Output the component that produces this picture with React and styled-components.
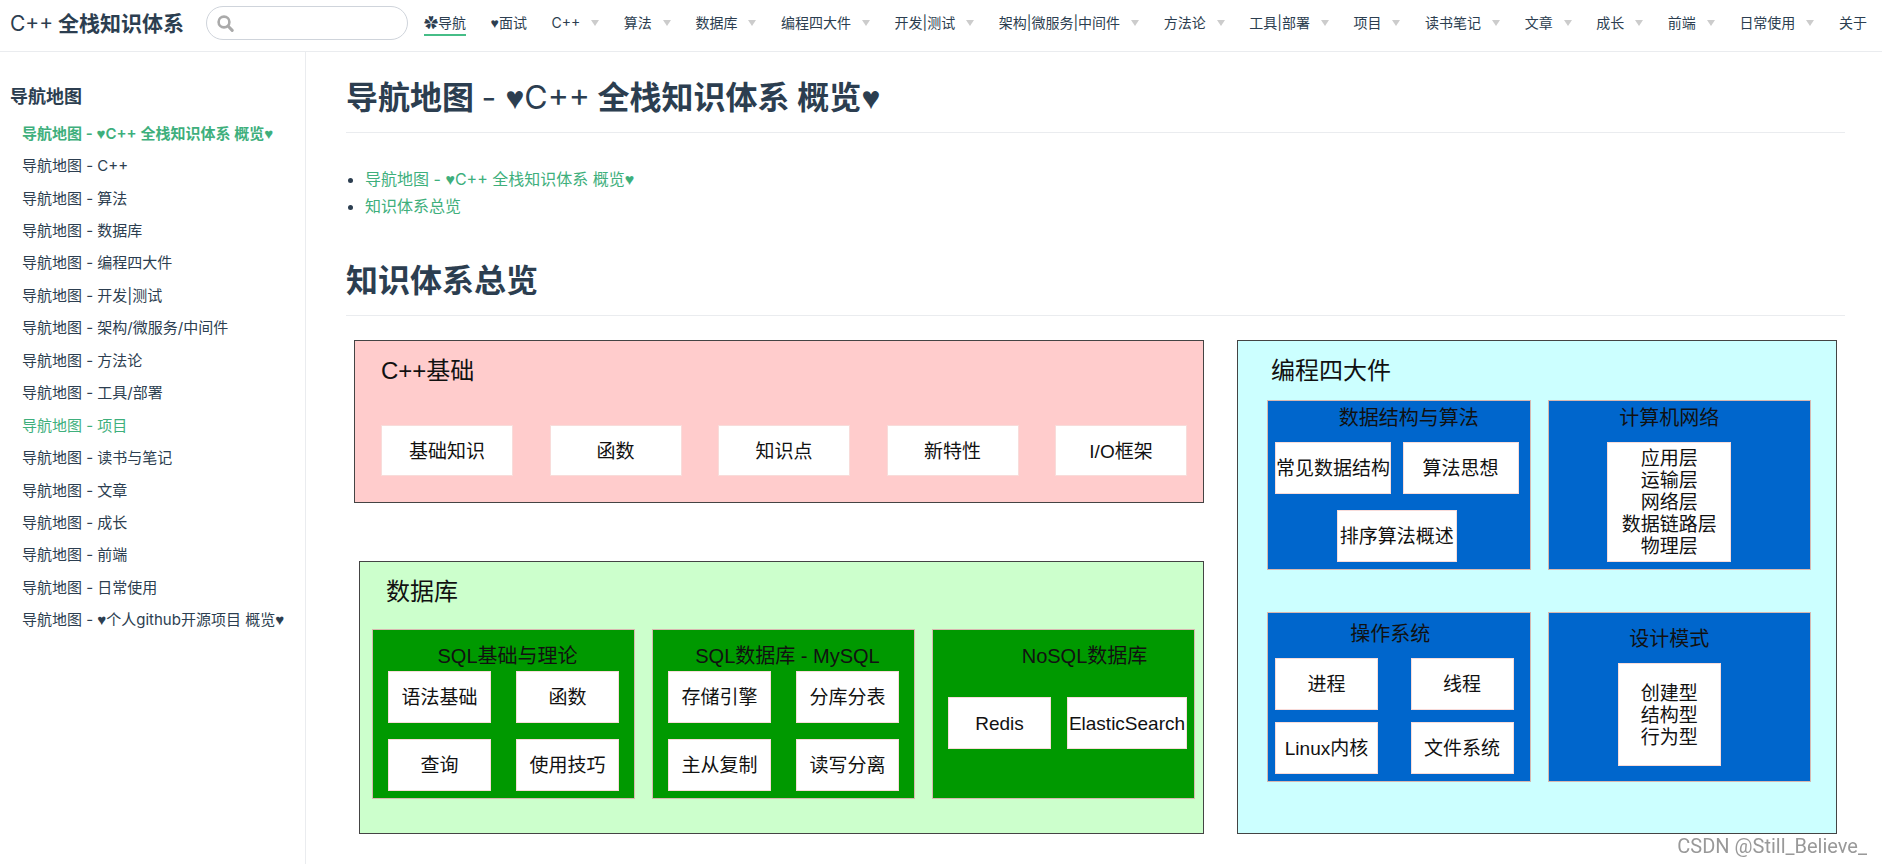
import React from "react";
import styled, { createGlobalStyle } from "styled-components";

const navItems = [
    { text: "✿导航", active: true },
    { text: "♥面试" },
    { text: "C++", menu: true },
    { text: "算法", menu: true },
    { text: "数据库", menu: true },
    { text: "编程四大件", menu: true },
    { text: "开发|测试", menu: true },
    { text: "架构|微服务|中间件", menu: true },
    { text: "方法论", menu: true },
    { text: "工具|部署", menu: true },
    { text: "项目", menu: true },
    { text: "读书笔记", menu: true },
    { text: "文章", menu: true },
    { text: "成长", menu: true },
    { text: "前端", menu: true },
    { text: "日常使用", menu: true },
    { text: "关于" },
];

const sideItems = [
    { text: "♥C++ 全栈知识体系 概览♥", bold: true, green: true },
    { text: "C++" },
    { text: "算法" },
    { text: "数据库" },
    { text: "编程四大件" },
    { text: "开发|测试" },
    { text: "架构/微服务/中间件" },
    { text: "方法论" },
    { text: "工具/部署" },
    { text: "项目", green: true },
    { text: "读书与笔记" },
    { text: "文章" },
    { text: "成长" },
    { text: "前端" },
    { text: "日常使用" },
    { text: "♥个人github开源项目 概览♥" },
];

// Inter's heart is too wide, so hearts get their own font
function Text({ children }) {
    return children.split(/(♥)/).map((part, i) => (
        part === "♥" ? <Heart key={i}>♥</Heart> : part
    ));
}

function SearchIcon() {
    return (
        <svg width="17" height="17" viewBox="0 0 17 17" fill="none" stroke="#aaa" aria-hidden="true">
            <circle cx="7" cy="7" r="5.4" strokeWidth="2.6" />
            <path d="M11 11 L15.2 15.4" strokeWidth="3" strokeLinecap="round" />
        </svg>
    );
}

function Header() {
    const [search, setSearch] = React.useState("");

    return (
        <Bar>
            <SiteName href="#home"><span>C++</span> 全栈知识体系</SiteName>
            <SearchBox>
                <SearchIcon />
                <input
                    type="text"
                    aria-label="搜索"
                    value={search}
                    onChange={(e) => setSearch(e.target.value)} />
            </SearchBox>
            <Nav>
                {navItems.map((item) => item.menu ? (
                    <NavButton key={item.text} type="button">
                        {item.text}
                        <Arrow />
                    </NavButton>
                ) : (
                    <NavLink key={item.text} href={"#" + item.text} $active={item.active}>
                        <Text>{item.text}</Text>
                    </NavLink>
                ))}
            </Nav>
        </Bar>
    );
}

function Sidebar() {
    return (
        <Side>
            <SideTitle>导航地图</SideTitle>
            <SideList>
                {sideItems.map((item) => (
                    <li key={item.text}>
                        <SideLink href={"#" + item.text} $bold={item.bold} $green={item.green}>
                            <Text>{"导航地图 - " + item.text}</Text>
                        </SideLink>
                    </li>
                ))}
            </SideList>
        </Side>
    );
}

function BasicsPanel() {
    return (
        <Panel $color="#ffcccc" $height={163}>
            <PanelTitle $left={26}>C++基础</PanelTitle>
            <BasicsRow>
                <Box $width={132} $height={51}>基础知识</Box>
                <Box $width={132} $height={51}>函数</Box>
                <Box $width={132} $height={51}>知识点</Box>
                <Box $width={132} $height={51}>新特性</Box>
                <Box $width={132} $height={51}>I/O框架</Box>
            </BasicsRow>
        </Panel>
    );
}

function DatabasePanel() {
    return (
        <DatabaseWrap>
            <Panel $color="#ccffcc" $height={273}>
                <PanelTitle $left={26}>数据库</PanelTitle>
                <DatabaseGroups>
                    <Group $color="#009900" $padding="13px 15px 0">
                        <GroupTitle $left={8}>SQL基础与理论</GroupTitle>
                        <Boxes $top={2} $gap={16}>
                            <Row>
                                <Box $width={103}>语法基础</Box>
                                <Box $width={103}>函数</Box>
                            </Row>
                            <Row>
                                <Box $width={103}>查询</Box>
                                <Box $width={103}>使用技巧</Box>
                            </Row>
                        </Boxes>
                    </Group>
                    <Group $color="#009900" $padding="13px 15px 0">
                        <GroupTitle $left={8}>SQL数据库 - MySQL</GroupTitle>
                        <Boxes $top={2} $gap={16}>
                            <Row>
                                <Box $width={103}>存储引擎</Box>
                                <Box $width={103}>分库分表</Box>
                            </Row>
                            <Row>
                                <Box $width={103}>主从复制</Box>
                                <Box $width={103}>读写分离</Box>
                            </Row>
                        </Boxes>
                    </Group>
                    <Group $color="#009900" $padding="13px 7px 0 15px">
                        <GroupTitle $left={34}>NoSQL数据库</GroupTitle>
                        <Boxes $top={28}>
                            <Row>
                                <Box $width={103}>Redis</Box>
                                <Box $width={120}>ElasticSearch</Box>
                            </Row>
                        </Boxes>
                    </Group>
                </DatabaseGroups>
            </Panel>
        </DatabaseWrap>
    );
}

function CorePanel() {
    return (
        <Panel $color="#ccffff" $height={494}>
            <PanelTitle $left={33}>编程四大件</PanelTitle>
            <CoreGroups>
                <Group $color="#0066cc" $padding="4px 11px 0 7px">
                    <GroupTitle $left={24}>数据结构与算法</GroupTitle>
                    <Boxes $top={11} $gap={16}>
                        <Row>
                            <Box $width={116}>常见数据结构</Box>
                            <Box $width={116}>算法思想</Box>
                        </Row>
                        <Row $center>
                            <Box $width={120}>排序算法概述</Box>
                        </Row>
                    </Boxes>
                </Group>
                <Group $color="#0066cc" $padding="4px 20px 0 0">
                    <GroupTitle>计算机网络</GroupTitle>
                    <Boxes $top={11}>
                        <Row $center>
                            <Box $width={124} $height={120}>
                                应用层<br />运输层<br />网络层<br />数据链路层<br />物理层
                            </Box>
                        </Row>
                    </Boxes>
                </Group>
                <Group $color="#0066cc" $padding="8px 16px 0 7px">
                    <GroupTitle $right={8}>操作系统</GroupTitle>
                    <Boxes $top={11} $gap={12}>
                        <Row>
                            <Box $width={103}>进程</Box>
                            <Box $width={103}>线程</Box>
                        </Row>
                        <Row>
                            <Box $width={103}>Linux内核</Box>
                            <Box $width={103}>文件系统</Box>
                        </Row>
                    </Boxes>
                </Group>
                <Group $color="#0066cc" $padding="13px 20px 0 0">
                    <GroupTitle>设计模式</GroupTitle>
                    <Boxes $top={11}>
                        <Row $center>
                            <Box $width={103} $height={103}>
                                创建型<br />结构型<br />行为型
                            </Box>
                        </Row>
                    </Boxes>
                </Group>
            </CoreGroups>
        </Panel>
    );
}

export default function App() {
    return (
        <>
            <GlobalStyle />
            <Header />
            <Page>
                <Sidebar />
                <Content>
                    <Heading id="map">
                        导航地图 <span>- <Text>♥C++</Text></span> <Text>全栈知识体系 概览♥</Text>
                    </Heading>
                    <Toc>
                        <li><a href="#map"><Text>导航地图 - ♥C++ 全栈知识体系 概览♥</Text></a></li>
                        <li><a href="#overview">知识体系总览</a></li>
                    </Toc>
                    <Heading id="overview">知识体系总览</Heading>
                    <Diagram>
                        <LeftColumn>
                            <BasicsPanel />
                            <DatabasePanel />
                        </LeftColumn>
                        <RightColumn>
                            <CorePanel />
                        </RightColumn>
                    </Diagram>
                </Content>
            </Page>
            <Watermark>CSDN @Still_Believe_</Watermark>
        </>
    );
}

const GlobalStyle = createGlobalStyle`
    * {
        box-sizing: border-box;
    }

    body {
        margin: 0;
        background: #fff;
        color: #2c3e50;
        font-family: Inter, "Liberation Sans", "Noto Sans CJK SC", sans-serif;
        font-size: 16px;
    }

    a {
        color: inherit;
        text-decoration: none;
    }

    ul {
        margin: 0;
        padding: 0;
    }
`

const Heart = styled.i`
    font-family: "Liberation Sans", sans-serif;
    font-style: normal;
    font-weight: 700;
    line-height: 1;
`

const Bar = styled.header`
    display: flex;
    align-items: center;
    padding: 6px 15px 11px 10px;
    border-bottom: 1px solid #eaecef;
`

const SiteName = styled.a`
    width: 196px;
    padding-top: 2px;
    font-size: 21px;
    font-weight: 700;
    line-height: 32px;
    white-space: nowrap;

    span {
        font-weight: 400;
    }
`

const SearchBox = styled.label`
    display: flex;
    align-items: center;
    gap: 8px;
    width: 202px;
    height: 34px;
    padding: 0 10px;
    border: 1px solid #cfd4db;
    border-radius: 17px;

    svg {
        flex: none;
    }

    input {
        flex: 1;
        min-width: 0;
        border: 0;
        outline: 0;
        background: none;
        color: inherit;
        font: inherit;
    }
`

const Nav = styled.nav`
    flex: 1;
    display: flex;
    justify-content: space-between;
    margin-left: 16px;
`

const NavLink = styled.a`
    padding-top: 2px;
    border-bottom: 2px solid ${(props) => props.$active ? "#46bd87" : "transparent"};
    font-size: 14px;
    line-height: 22px;
    white-space: nowrap;
`

const NavButton = styled.button`
    display: flex;
    align-items: center;
    gap: 11px;
    padding: 2px 0 0;
    border: 0;
    border-bottom: 2px solid transparent;
    background: none;
    color: inherit;
    font-family: inherit;
    font-size: 14px;
    line-height: 22px;
    white-space: nowrap;
    cursor: pointer;
`

const Arrow = styled.span`
    border-left: 4px solid transparent;
    border-right: 4px solid transparent;
    border-top: 6px solid #ccc;
`

const Page = styled.div`
    display: flex;
    min-height: calc(100vh - 52px);
`

const Side = styled.aside`
    flex: none;
    width: 306px;
    padding: 33px 0 0 10px;
    border-right: 1px solid #eaecef;
`

const SideTitle = styled.p`
    margin: 0;
    font-size: 18px;
    font-weight: 700;
    line-height: 24px;
`

const SideList = styled.ul`
    display: grid;
    grid-auto-rows: 1fr;
    align-items: center;
    min-height: 519px;
    margin-top: 8px;
    padding-left: 12px;
    list-style: none;
`

const SideLink = styled.a`
    display: block;
    color: ${(props) => props.$green ? "#3eaf7c" : "#2c3e50"};
    font-size: 15px;
    font-weight: ${(props) => props.$bold ? 600 : 400};
    line-height: 21px;
    white-space: nowrap;
`

const Content = styled.main`
    flex: 1;
    min-width: 0;
    padding: 26px 37px 30px 40px;
`

const Heading = styled.h1`
    margin: 0;
    padding-bottom: 14px;
    border-bottom: 1px solid #eaecef;
    font-size: 32px;
    font-weight: 700;
    line-height: 40px;

    span {
        font-weight: 400;
    }
`

const Toc = styled.ul`
    margin: 33px 0 41px;
    padding-left: 19px;
    line-height: 27px;

    a {
        color: #3eaf7c;
    }
`

const Diagram = styled.div`
    display: flex;
    gap: 33px;
    margin-top: 24px;
    padding: 0 8px;
    color: #111;
    font-family: "Liberation Sans", "Noto Sans CJK SC", sans-serif;
`

const LeftColumn = styled.div`
    flex: 850 1 0;
    display: flex;
    flex-direction: column;
    gap: 58px;
`

const RightColumn = styled.div`
    flex: 600 1 0;
`

const DatabaseWrap = styled.div`
    padding-left: 5px;
`

const Panel = styled.section`
    min-height: ${(props) => props.$height}px;
    padding-top: 14px;
    border: 1px solid #444;
    background: ${(props) => props.$color};
`

const PanelTitle = styled.h2`
    margin: 0;
    padding-left: ${(props) => props.$left}px;
    font-size: 24px;
    font-weight: 400;
    line-height: 32px;
`

const BasicsRow = styled.div`
    display: flex;
    justify-content: space-between;
    margin-top: 38px;
    padding: 0 16px 0 26px;
`

const DatabaseGroups = styled.div`
    display: grid;
    grid-template-columns: repeat(3, 1fr);
    gap: 17px;
    margin-top: 21px;
    padding: 0 8px 0 12px;
`

const CoreGroups = styled.div`
    display: grid;
    grid-template-columns: repeat(2, 1fr);
    gap: 42px 17px;
    margin-top: 13px;
    padding: 0 25px 0 29px;
`

const Group = styled.div`
    min-height: 170px;
    padding: ${(props) => props.$padding};
    border: 1px solid #d8b8b0;
    background: ${(props) => props.$color};
`

const GroupTitle = styled.h3`
    margin: 0;
    padding-left: ${(props) => props.$left || 0}px;
    padding-right: ${(props) => props.$right || 0}px;
    font-size: 20px;
    font-weight: 400;
    line-height: 26px;
    text-align: center;
    white-space: nowrap;
`

const Boxes = styled.div`
    display: flex;
    flex-direction: column;
    gap: ${(props) => props.$gap || 0}px;
    margin-top: ${(props) => props.$top}px;
`

const Row = styled.div`
    display: flex;
    justify-content: ${(props) => props.$center ? "center" : "space-between"};
`

const Box = styled.div`
    display: flex;
    justify-content: center;
    align-items: center;
    width: ${(props) => props.$width}px;
    height: ${(props) => props.$height || 52}px;
    padding-top: 2px;
    border: 1px solid #f8dcda;
    background: #fff;
    font-size: 19px;
    line-height: 22px;
    text-align: center;
    white-space: nowrap;
`

const Watermark = styled.div`
    position: fixed;
    right: 15px;
    bottom: 6px;
    color: #999;
    font-family: Roboto, "Liberation Sans", sans-serif;
    font-size: 20px;
    line-height: 24px;
`
